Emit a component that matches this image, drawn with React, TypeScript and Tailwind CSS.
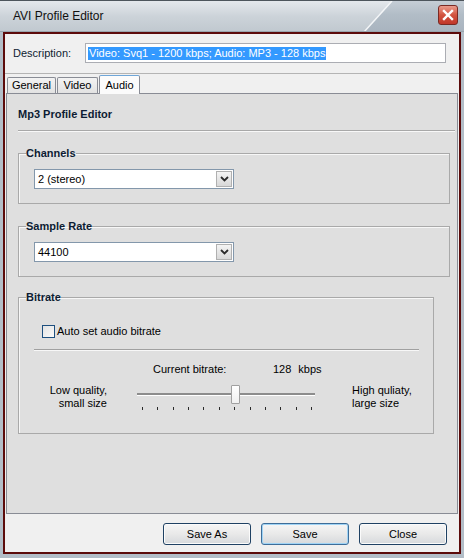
import { ReactNode } from 'react';

const font = "font-['Liberation_Sans',Arial,sans-serif]";

export default function App() {
  return (
    <div className={`flex h-[558px] w-[464px] flex-col bg-[#b3bec8] ${font} text-[11px] leading-[13px] text-black`}>
      <TitleBar />
      <div className="mx-[3px] mb-[4px] flex flex-1 flex-col border-2 border-[#5c0b0b] bg-[#f0f0f0]">
        <div className="flex items-center pl-[8px] pr-[13px] pt-[9px]">
          <span className="w-[72px] text-[#0f1c30]">Description:</span>
          <div className="flex h-[20px] w-[361px] items-center border border-[#abadb3] bg-white pl-[2px]">
            <span className="bg-[#3399ff] px-px text-white">Video: Svq1 - 1200 kbps; Audio: MP3 - 128 kbps</span>
          </div>
        </div>
        <div className="mt-[10px] border-t border-[#b4b4b4]" />
        <div className="flex h-[19px] items-end pl-[2px]">
          <Tab label="General" width="w-[49px]" />
          <Tab label="Video" width="w-[41px]" />
          <div className="relative z-10 mb-[-1px] flex h-[19px] w-[41px] items-center justify-center rounded-t-[2px] border border-b-0 border-[#898c95] border-t-[#6fa6d8] bg-[#fbfbfb]">
            Audio
          </div>
        </div>
        <AudioPanel />
        <div className="mt-[9px] flex justify-end gap-[10px] pr-[12px]">
          <Button label="Save As" />
          <Button label="Save" primary />
          <Button label="Close" />
        </div>
      </div>
    </div>
  );
}

function TitleBar() {
  return (
    <div className="relative flex h-[32px] items-center bg-gradient-to-b from-[#e4e8ec] via-[#ccd3d9] to-[#c0c8cf] border-t border-[#4d555c]">
      <svg className="absolute inset-0" width="464" height="31" viewBox="0 0 464 31">
        <defs>
          <linearGradient id="rg" x1="0" y1="0" x2="0" y2="1">
            <stop offset="0" stopColor="#c6ced6" />
            <stop offset="0.45" stopColor="#b1bcc6" />
            <stop offset="1" stopColor="#a9b4bf" />
          </linearGradient>
        </defs>
        <polygon points="392,0 464,0 464,31 364,31" fill="url(#rg)" />
        <line x1="392" y1="0" x2="364" y2="31" stroke="#f4f6f8" strokeWidth="1.5" />
        <line x1="0" y1="30.5" x2="464" y2="30.5" stroke="#9aa5ae" strokeWidth="1" />
      </svg>
      <span className="relative pl-[13px] text-[12px] text-[#101010]">AVI Profile Editor</span>
      <div className="relative ml-auto mr-[6px] mt-[-3px] flex h-[20px] w-[20px] items-center justify-center rounded-[3px] border border-[#7a2a24] bg-gradient-to-b from-[#e99a8c] via-[#d2533f] to-[#c0362a]">
        <svg width="12" height="12" viewBox="0 0 12 12">
          <path d="M2 2 L10 10 M10 2 L2 10" stroke="#ffffff" strokeWidth="2.4" strokeLinecap="square" />
        </svg>
      </div>
    </div>
  );
}

function Tab({ label, width }: { label: string; width: string }) {
  return (
    <div className={`mr-[1px] flex h-[16px] ${width} items-center justify-center rounded-t-[2px] border border-b-0 border-[#898c95] bg-gradient-to-b from-[#f3f3f3] to-[#e2e2e2]`}>
      {label}
    </div>
  );
}

function AudioPanel() {
  return (
    <div className="mx-px h-[421px] border border-[#898c95] bg-[#dfdfdf] pl-[11px] pr-[2px] pt-[14px]">
      <div className="font-bold text-[#0d1c33]">Mp3 Profile Editor</div>
      <div className="mt-[9px] border-t border-[#a8a8a8] shadow-[0_1px_0_#f8f8f8]" />
      <Group title="Channels" width="w-[432px]" className="mt-[16px]">
        <Select value="2 (stereo)" />
      </Group>
      <Group title="Sample Rate" width="w-[432px]" className="mt-[16px]">
        <Select value="44100" />
      </Group>
      <fieldset className="mt-[14px] w-[416px] border border-[#a9a9a9] px-[7px] pb-[23px] shadow-[inset_1px_1px_0_#f7f7f7]">
        <legend className="font-bold text-[#0d1c33]">Bitrate</legend>
        <div className="ml-[16px] mt-[21px] flex items-center">
          <div className="h-[13px] w-[13px] border border-[#1d4f7f] bg-gradient-to-br from-[#e3e3e3] to-[#fafafa]" />
          <span className="ml-[2px]">Auto set audio bitrate</span>
        </div>
        <div className="ml-[8px] mr-[7px] mt-[11px] border-t border-[#a0a0a0] shadow-[0_1px_0_#f7f7f7]" />
        <div className="ml-[127px] mt-[13px] flex">
          <span className="w-[120px]">Current bitrate:</span>
          <span>128</span>
          <span className="ml-[7px]">kbps</span>
        </div>
        <div className="mt-[8px] flex items-start">
          <div className="w-[81px] text-right">
            <div>Low quality,</div>
            <div>small size</div>
          </div>
          <Slider />
          <div className="ml-[34px]">
            <div>High quliaty,</div>
            <div>large size</div>
          </div>
        </div>
      </fieldset>
    </div>
  );
}

function Group({ title, width, className, children }: { title: string; width: string; className: string; children: ReactNode }) {
  return (
    <fieldset className={`${className} ${width} border border-[#a9a9a9] px-[7px] pb-[14px] shadow-[inset_1px_1px_0_#f7f7f7]`}>
      <legend className="font-bold text-[#0d1c33]">{title}</legend>
      <div className="ml-[8px] mt-[9px]">{children}</div>
    </fieldset>
  );
}

function Select({ value }: { value: string }) {
  return (
    <div className="flex h-[20px] w-[200px] items-center border border-[#8397ab] bg-white pl-[3px]">
      <span className="flex-1">{value}</span>
      <div className="mr-px flex h-[16px] w-[16px] items-center justify-center border border-[#b0b0b0] bg-gradient-to-b from-[#f4f4f4] to-[#d8d8d8]">
        <svg width="9" height="6" viewBox="0 0 9 6">
          <path d="M1 1 L4.5 4.5 L8 1" fill="none" stroke="#2b2b2b" strokeWidth="1.8" />
        </svg>
      </div>
    </div>
  );
}

function Slider() {
  return (
    <div className="relative ml-[27px] mt-[1px] w-[184px]">
      <div className="ml-[3px] mr-[3px] mt-[8px] h-[3px] border-t-2 border-[#8c8c8c] bg-white" />
      <div className="ml-[8px] mr-[6px] mt-[11px] flex justify-between">
        {Array.from({ length: 12 }).map((_, i) => (
          <div key={i} className="h-[3px] w-px bg-[#2a2a2a]" />
        ))}
      </div>
      <div className="absolute left-[97px] top-0 h-[19px] w-[9px] rounded-[1px] border border-[#a0a0a0] bg-gradient-to-b from-white to-[#f0f0f0]" />
    </div>
  );
}

function Button({ label, primary }: { label: string; primary?: boolean }) {
  return (
    <div
      className={`flex h-[22px] w-[88px] items-center justify-center rounded-[3px] border bg-gradient-to-b from-[#f6f6f6] via-[#e9e9e9] to-[#d6d9dc] ${
        primary ? 'border-[#3d6d99] shadow-[inset_0_0_0_1px_#9fd3f5]' : 'border-[#1f4163] shadow-[inset_0_0_0_1px_#fbfbfb]'
      }`}
    >
      {label}
    </div>
  );
}
